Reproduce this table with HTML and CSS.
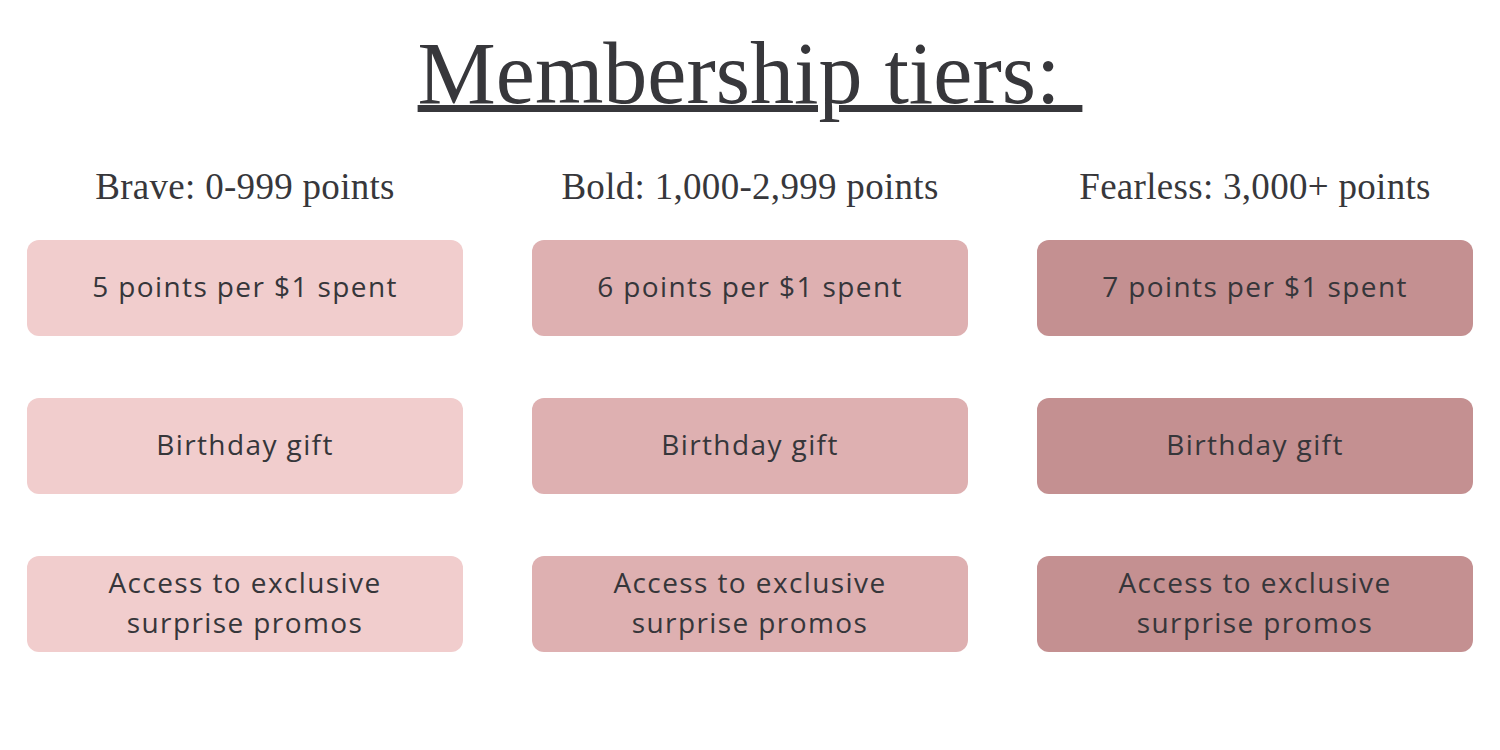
FILE: index.html
```html
<!DOCTYPE html>
<html lang="en">
<head>
<meta charset="utf-8">
<title>Membership tiers</title>
<link rel="stylesheet" href="styles.css">
</head>
<body>
<main class="page">
  <h1 class="title"><span class="title-text">Membership tiers:&nbsp;</span></h1>
  <section class="tiers">
    <div class="tier tier-brave">
      <h2 class="tier-name">Brave: 0-999 points</h2>
      <div class="perk">5 points per $1 spent</div>
      <div class="perk">Birthday gift</div>
      <div class="perk">Access to exclusive<br>surprise promos</div>
    </div>
    <div class="tier tier-bold">
      <h2 class="tier-name">Bold: 1,000-2,999 points</h2>
      <div class="perk">6 points per $1 spent</div>
      <div class="perk">Birthday gift</div>
      <div class="perk">Access to exclusive<br>surprise promos</div>
    </div>
    <div class="tier tier-fearless">
      <h2 class="tier-name">Fearless: 3,000+ points</h2>
      <div class="perk">7 points per $1 spent</div>
      <div class="perk">Birthday gift</div>
      <div class="perk">Access to exclusive<br>surprise promos</div>
    </div>
  </section>
</main>
</body>
</html>
```

FILE: styles.css
```css
* { box-sizing: border-box; }
html, body { margin: 0; padding: 0; background: #ffffff; }
body {
  width: 1500px;
  height: 750px;
  overflow: hidden;
  color: #37373b;
}
.page {
  padding: 25px 27px 0;
}
.title {
  margin: 0;
  text-align: center;
  font-family: "Liberation Serif", "DejaVu Serif", serif;
  font-weight: 400;
  font-size: 88px;
  line-height: 97px;
}
.title-text {
  text-decoration: underline;
  text-decoration-thickness: 7px;
  text-underline-offset: 2px;
  text-decoration-skip-ink: auto;
}
.tiers {
  margin-top: 45px;
  display: grid;
  grid-template-columns: repeat(3, 436px);
  column-gap: 69px;
}
.tier {
  display: flex;
  flex-direction: column;
  gap: 62px;
}
.tier-name {
  margin: 0 0 -29px;
  text-align: center;
  font-family: "Liberation Serif", "DejaVu Serif", serif;
  font-weight: 400;
  font-size: 37px;
  letter-spacing: 0.3px;
  line-height: 40px;
}
.perk {
  height: 96px;
  border-radius: 12px;
  display: flex;
  align-items: center;
  justify-content: center;
  text-align: center;
  font-family: "Open Sans", "DejaVu Sans", sans-serif;
  font-size: 28px;
  letter-spacing: 1.4px;
  line-height: 40px;
  padding-bottom: 4px;
  color: #36363a;
}
.tier-brave .perk { background: #f1cdcd; }
.tier-bold .perk { background: #deb0b1; }
.tier-fearless .perk { background: #c49091; }
```
